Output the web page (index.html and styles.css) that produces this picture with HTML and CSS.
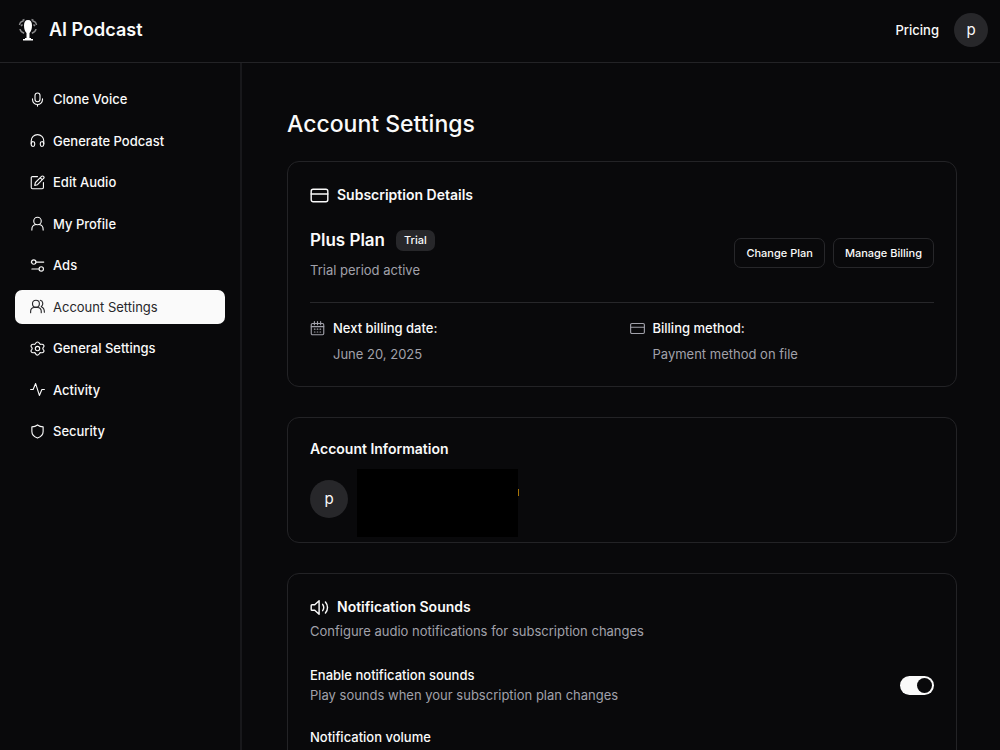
FILE: index.html
```html
<!DOCTYPE html>
<html lang="en">
<head>
<meta charset="utf-8">
<meta name="viewport" content="width=device-width, initial-scale=1">
<title>AI Podcast - Account Settings</title>
<link rel="stylesheet" href="styles.css">
</head>
<body>
<div class="app">
  <header class="topbar">
    <a class="brand" href="#">
      <svg class="logo" viewBox="0 0 20 24" aria-hidden="true">
        <path class="logo-line" d="M5.500 3.500C4 3 2 4 1.500 7M14.500 3.500C16 3 18 4 18.500 7M4.500 6.500L3 8M15.500 6.500L17 8M2 11c.3 2 2 3.500 4.200 4.300M18 11c-.3 2-2 3.500-4.200 4.300M4.500 2.500l2-1M15.500 2.500l-2-1"/>
        <path class="logo-fill" d="M10 2c2.800 0 4 2 4 5.500 0 3.500-1 6-2.500 7.500V20h1.500v1h2v1.500H5V21h2v-1h1.500v-5C7 13.500 6 11 6 7.500 6 4 7.200 2 10 2z"/>
      </svg>
      <span>AI Podcast</span>
    </a>
    <div class="topbar-end">
      <a class="pricing" href="#">Pricing</a>
      <button class="avatar avatar-small" type="button" aria-label="Open user menu">p</button>
    </div>
  </header>
  <div class="body">
    <nav class="sidebar" aria-label="Main">
      <div class="nav-list">
      <a class="nav-item" href="#"><svg class="icon" viewBox="0 0 24 24"><rect x="8" y="1.500" width="8" height="14" rx="4"/><path d="M4 11v1a8 8 0 0 0 16 0v-1M12 20V22.500"/></svg>Clone Voice</a>
      <a class="nav-item" href="#"><svg class="icon" viewBox="0 0 24 24"><path d="M2 17v-4.500a10 10 0 0 1 20 0V17"/><path d="M2 16.500c0-2 1.500-3 3.300-2.700C7 14 7.500 15 7.500 16.500v2c0 1.800-.8 3-2.500 3-2 0-3-1.500-3-3zM22 16.500c0-2-1.500-3-3.300-2.700-1.700.2-2.200 1.200-2.200 2.700v2c0 1.800.8 3 2.500 3 2 0 3-1.500 3-3z"/></svg>Generate Podcast</a>
      <a class="nav-item" href="#"><svg class="icon" viewBox="0 0 24 24"><path d="M12 2.500H4a2 2 0 0 0-2 2V20a2 2 0 0 0 2 2h15.500a2 2 0 0 0 2-2v-8"/><path d="M18.500 2.300a2.200 2.200 0 0 1 3.200 3.200L12 15.500l-4.500 1.200L8.700 12zM16.500 4.500l3 3"/></svg>Edit Audio</a>
      <a class="nav-item" href="#"><svg class="icon" viewBox="0 0 24 24"><circle cx="12" cy="8" r="6"/><path d="M3 22.500v-1.500c0-4 3-7 6.500-7.500M21 22.500v-1.500c0-4-3-7-6.500-7.500"/></svg>My Profile</a>
      <a class="nav-item" href="#"><svg class="icon" viewBox="0 0 24 24"><circle cx="6" cy="6.500" r="3.500"/><path d="M9.500 6.500H22M2 6.500h.5M3 17.500h11.500"/><circle cx="18" cy="17.500" r="3.500"/></svg>Ads</a>
      <a class="nav-item active" href="#" aria-current="page"><svg class="icon" viewBox="0 0 24 24"><circle cx="9.500" cy="7.500" r="5.500"/><path d="M1 22v-2c0-4 2.500-6.500 6-6.500h5c3.500 0 6 2.500 6 6.500v2M16.500 2c4.500.8 5.500 7.500 1.500 10.500 3.500 1.300 5 4.500 5 8.500"/></svg>Account Settings</a>
      <a class="nav-item" href="#"><svg class="icon" viewBox="0 0 24 24"><path d="M12 1.500c1.500 0 2.500.8 3 2.200.5 1.500 1.500 2 3 1.600 2-.4 3.200 0 4 1.500.7 1.300.4 2.400-.7 3.500-1 1.100-1 2.300 0 3.400 1.100 1.100 1.400 2.200.7 3.500-.8 1.500-2 1.900-4 1.500-1.500-.4-2.500.1-3 1.600-.5 1.400-1.500 2.200-3 2.200s-2.500-.8-3-2.200c-.5-1.500-1.500-2-3-1.600-2 .4-3.200 0-4-1.500-.7-1.300-.4-2.400.7-3.500 1-1.100 1-2.300 0-3.400C1.600 9.200 1.300 8.100 2 6.800c.8-1.500 2-1.900 4-1.500 1.500.4 2.500-.1 3-1.600.5-1.400 1.500-2.200 3-2.200z"/><circle cx="12" cy="12" r="3.500"/></svg>General Settings</a>
      <a class="nav-item" href="#"><svg class="icon" viewBox="0 0 24 24"><path d="M1 12h4L9 2.500l6 19 4-9.500h4"/></svg>Activity</a>
      <a class="nav-item" href="#"><svg class="icon" viewBox="0 0 24 24"><path d="M12 1.500c2.500 2 5.500 3 9 3V12c0 5-3.500 8.500-9 10.500C6.500 20.500 3 17 3 12V4.500c3.500 0 6.500-1 9-3z"/></svg>Security</a>
      </div>
    </nav>
    <main class="main">
      <h1 class="page-title">Account Settings</h1>

      <section class="card" aria-labelledby="sub-title">
        <h2 class="card-title with-icon" id="sub-title"><svg class="icon icon-large" viewBox="0 0 24 24"><rect x="1.500" y="4" width="21" height="16" rx="2.500"/><path d="M1.500 10h21"/></svg>Subscription Details</h2>
        <div class="plan">
          <div class="plan-info">
            <div class="plan-head"><h3 class="plan-name">Plus Plan</h3><span class="badge">Trial</span></div>
            <p class="muted">Trial period active</p>
          </div>
          <div class="actions">
            <button class="button" type="button">Change Plan</button>
            <button class="button" type="button">Manage Billing</button>
          </div>
        </div>
        <dl class="billing">
          <div class="billing-item">
            <dt><svg class="icon dim" viewBox="0 0 24 24"><rect x="2" y="4" width="20" height="18" rx="2"/><path d="M7 1v5M12 1v5M17 1v5M2 9h20M7 13h1M11.500 13h1M16 13h1M7 17.500h1M11.500 17.500h1M16 17.500h1"/></svg>Next billing date:</dt>
            <dd class="muted">June 20, 2025</dd>
          </div>
          <div class="billing-item">
            <dt><svg class="icon dim" viewBox="0 0 24 24"><rect x="1" y="4" width="22" height="16" rx="2"/><path d="M1 10h22"/></svg>Billing method:</dt>
            <dd class="muted">Payment method on file</dd>
          </div>
        </dl>
      </section>

      <section class="card" aria-labelledby="info-title">
        <h2 class="card-title" id="info-title">Account Information</h2>
        <div class="account">
          <span class="avatar">p</span>
          <div class="account-details"><span class="redaction"></span></div>
        </div>
      </section>

      <section class="card" aria-labelledby="sound-title">
        <h2 class="card-title with-icon" id="sound-title"><svg class="icon icon-large" viewBox="0 0 24 24"><path d="M1.500 9.500q0-1 1-1H6L11.500 3.500V20.500L6 15.500H2.500q-1 0-1-1zM16 8c1.700 2.500 1.700 5.500 0 8M19.500 5c3.500 4 3.500 10 0 14"/></svg>Notification Sounds</h2>
        <p class="muted card-text">Configure audio notifications for subscription changes</p>
        <div class="setting">
          <div>
            <label class="setting-label" for="sounds">Enable notification sounds</label>
            <p class="muted setting-text">Play sounds when your subscription plan changes</p>
          </div>
          <input class="switch" id="sounds" type="checkbox" role="switch" checked>
        </div>
        <div class="volume">
          <label class="setting-label" for="volume">Notification volume</label>
          <input class="slider" id="volume" type="range" value="50">
        </div>
      </section>
    </main>
  </div>
</div>
</body>
</html>
```
FILE: styles.css
```css
* {
  box-sizing: border-box;
}

body {
  margin: 0;
  background: #09090b;
  color: #fafafa;
  font: 500 13px/20px Inter, "Liberation Sans", sans-serif;
}

h1, h2, h3, p, dl, dd {
  margin: 0;
}

a {
  color: inherit;
  text-decoration: none;
}

button {
  font: inherit;
  color: inherit;
  cursor: pointer;
}

.app {
  display: flex;
  flex-direction: column;
  height: 100vh;
}

.topbar {
  display: flex;
  align-items: center;
  justify-content: space-between;
  flex: none;
  padding: 13px 12px 15px 18px;
  border-bottom: 1px solid #232326;
}

.brand {
  display: flex;
  align-items: center;
  gap: 11px;
  font-size: 18px;
  font-weight: 600;
  line-height: 28px;
}

.logo {
  width: 20px;
  height: 24px;
}

.logo-fill {
  fill: #fff;
}

.logo-line {
  fill: none;
  stroke: #8a8a8c;
  stroke-width: 1.5;
}

.topbar-end {
  display: flex;
  align-items: center;
  gap: 15px;
}

.avatar {
  display: flex;
  align-items: center;
  justify-content: center;
  flex: none;
  width: 38px;
  height: 38px;
  padding: 0;
  border: 0;
  border-radius: 50%;
  background: #27272a;
  font-size: 15px;
  font-weight: 400;
}

.avatar-small {
  width: 34px;
  height: 34px;
}

.body {
  display: flex;
  flex: 1;
  min-height: 0;
}

.sidebar {
  flex: none;
  width: 242px;
  padding: 19px 15px;
  border-right: 2px solid #18181b;
}

.nav-list {
  display: flex;
  flex-direction: column;
  justify-content: space-between;
  min-height: 366px;
}

.nav-item {
  display: flex;
  align-items: center;
  gap: 8px;
  padding: 7px 15px;
  border-radius: 7px;
}

.nav-item.active {
  background: #fafafa;
  color: #27272a;
  font-weight: 400;
}

.icon {
  flex: none;
  width: 15px;
  height: 15px;
  fill: none;
  stroke: currentColor;
  stroke-width: 1.8;
  stroke-linecap: round;
  stroke-linejoin: round;
}

.icon-large {
  width: 19px;
  height: 19px;
}

.dim {
  color: #a1a1aa;
}

.main {
  display: flex;
  flex-direction: column;
  flex: 1;
  gap: 30px;
  min-width: 0;
  padding: 45px 43px 45px 45px;
  overflow-y: auto;
  scrollbar-width: none;
}

.page-title {
  margin-bottom: -9px;
  font-size: 23px;
  font-weight: 500;
  line-height: 32px;
}

.card {
  flex: none;
  padding: 22px;
  border: 1px solid #232326;
  border-radius: 12px;
}

.card-title {
  display: flex;
  align-items: center;
  gap: 8px;
  font-size: 14px;
  font-weight: 600;
  line-height: 18px;
}

.with-icon {
  min-height: 22px;
}

.muted {
  color: #a1a1aa;
  font-weight: 400;
}

.plan {
  display: flex;
  align-items: center;
  justify-content: space-between;
  margin-top: 19px;
  padding-bottom: 22px;
  border-bottom: 1px solid #27272a;
}

.plan-info {
  display: grid;
  gap: 9px;
  padding-top: 4px;
}

.plan-head {
  display: flex;
  align-items: center;
  gap: 11px;
}

.plan-name {
  font-size: 17px;
  font-weight: 600;
  line-height: 22px;
}

.badge {
  padding: 2px 8px;
  border-radius: 7px;
  background: #27272a;
  font-size: 11px;
  line-height: 17px;
}

.actions {
  display: flex;
  gap: 8px;
}

.button {
  padding: 6px 11px;
  border: 1px solid #27272a;
  border-radius: 7px;
  background: none;
  font-size: 11px;
  line-height: 16px;
}

.billing {
  display: grid;
  grid-template-columns: 1fr 1fr;
  gap: 15px;
  padding-top: 15px;
}

.billing-item {
  display: grid;
  gap: 6px;
}

.billing-item dt {
  display: flex;
  align-items: center;
  gap: 8px;
}

.billing-item dd {
  padding-left: 23px;
}

.account {
  display: flex;
  align-items: center;
  gap: 9px;
  margin-top: 22px;
  padding-bottom: 2px;
}

.account-details {
  position: relative;
  align-self: stretch;
  flex: 1;
}

.redaction {
  position: absolute;
  top: -11px;
  left: 0;
  width: 161px;
  height: 68px;
  background: #000;
}

.redaction::after {
  content: "";
  position: absolute;
  top: 20px;
  right: -1px;
  width: 1px;
  height: 7px;
  background: #a87508;
}

.card-text {
  margin-top: 3px;
}

.setting {
  display: flex;
  align-items: center;
  justify-content: space-between;
  margin-top: 24px;
}

.setting-label {
  display: block;
}

.switch {
  appearance: none;
  flex: none;
  width: 34px;
  height: 19px;
  margin: 0;
  padding: 2px;
  border-radius: 10px;
  background: #71717a;
}

.switch::before {
  content: "";
  display: block;
  width: 15px;
  height: 15px;
  border-radius: 50%;
  background: #09090b;
}

.switch:checked {
  background: #fafafa;
}

.switch:checked::before {
  margin-left: auto;
}

.volume {
  display: grid;
  gap: 12px;
  margin-top: 22px;
}

.slider {
  width: 100%;
  margin: 0;
  accent-color: #fafafa;
}
```
